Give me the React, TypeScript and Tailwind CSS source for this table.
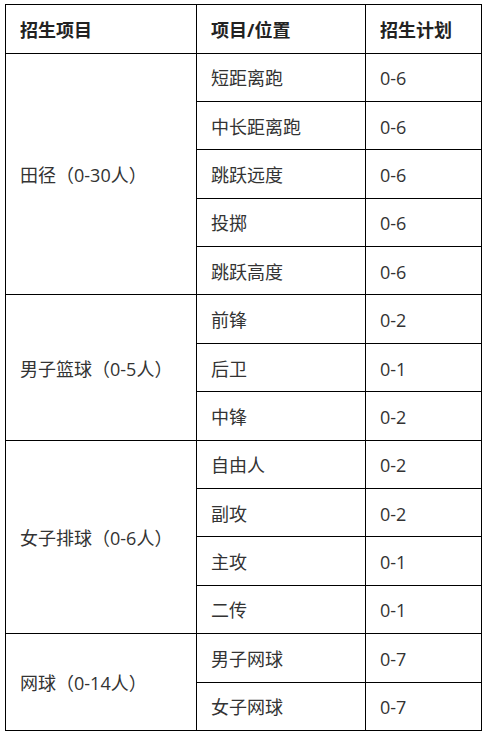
const groups = [
  {
    name: '田径（0-30人）',
    items: [
      ['短距离跑', '0-6'],
      ['中长距离跑', '0-6'],
      ['跳跃远度', '0-6'],
      ['投掷', '0-6'],
      ['跳跃高度', '0-6'],
    ],
  },
  {
    name: '男子篮球（0-5人）',
    items: [
      ['前锋', '0-2'],
      ['后卫', '0-1'],
      ['中锋', '0-2'],
    ],
  },
  {
    name: '女子排球（0-6人）',
    items: [
      ['自由人', '0-2'],
      ['副攻', '0-2'],
      ['主攻', '0-1'],
      ['二传', '0-1'],
    ],
  },
  {
    name: '网球（0-14人）',
    items: [
      ['男子网球', '0-7'],
      ['女子网球', '0-7'],
    ],
  },
]

const cell = 'border border-black px-[14px] pt-[3px] text-left align-middle'

export default function App() {
  return (
    <div
      className="w-[488px] h-[736px] bg-white pl-[5px] pt-[4px] text-[18px] text-[#333]"
      style={{ fontFamily: '"Open Sans", "Noto Sans CJK SC", sans-serif' }}
    >
      <table className="border-collapse w-[477px] table-fixed">
        <colgroup>
          <col className="w-[191px]" />
          <col className="w-[169px]" />
          <col />
        </colgroup>
        <thead>
          {/* 表头 */}
          <tr className="h-[48.5px]">
            <th className={`${cell} font-bold text-[#222]`}>招生项目</th>
            <th className={`${cell} font-bold text-[#222]`}>项目/位置</th>
            <th className={`${cell} font-bold text-[#222]`}>招生计划</th>
          </tr>
        </thead>
        <tbody>
          {groups.map((g) =>
            g.items.map(([pos, plan], i) => (
              <tr key={g.name + pos} className="h-[48.4px]">
                {i === 0 && (
                  <td rowSpan={g.items.length} className={cell}>
                    {g.name}
                  </td>
                )}
                <td className={cell}>{pos}</td>
                <td className={cell}>{plan}</td>
              </tr>
            ))
          )}
        </tbody>
      </table>
    </div>
  )
}
